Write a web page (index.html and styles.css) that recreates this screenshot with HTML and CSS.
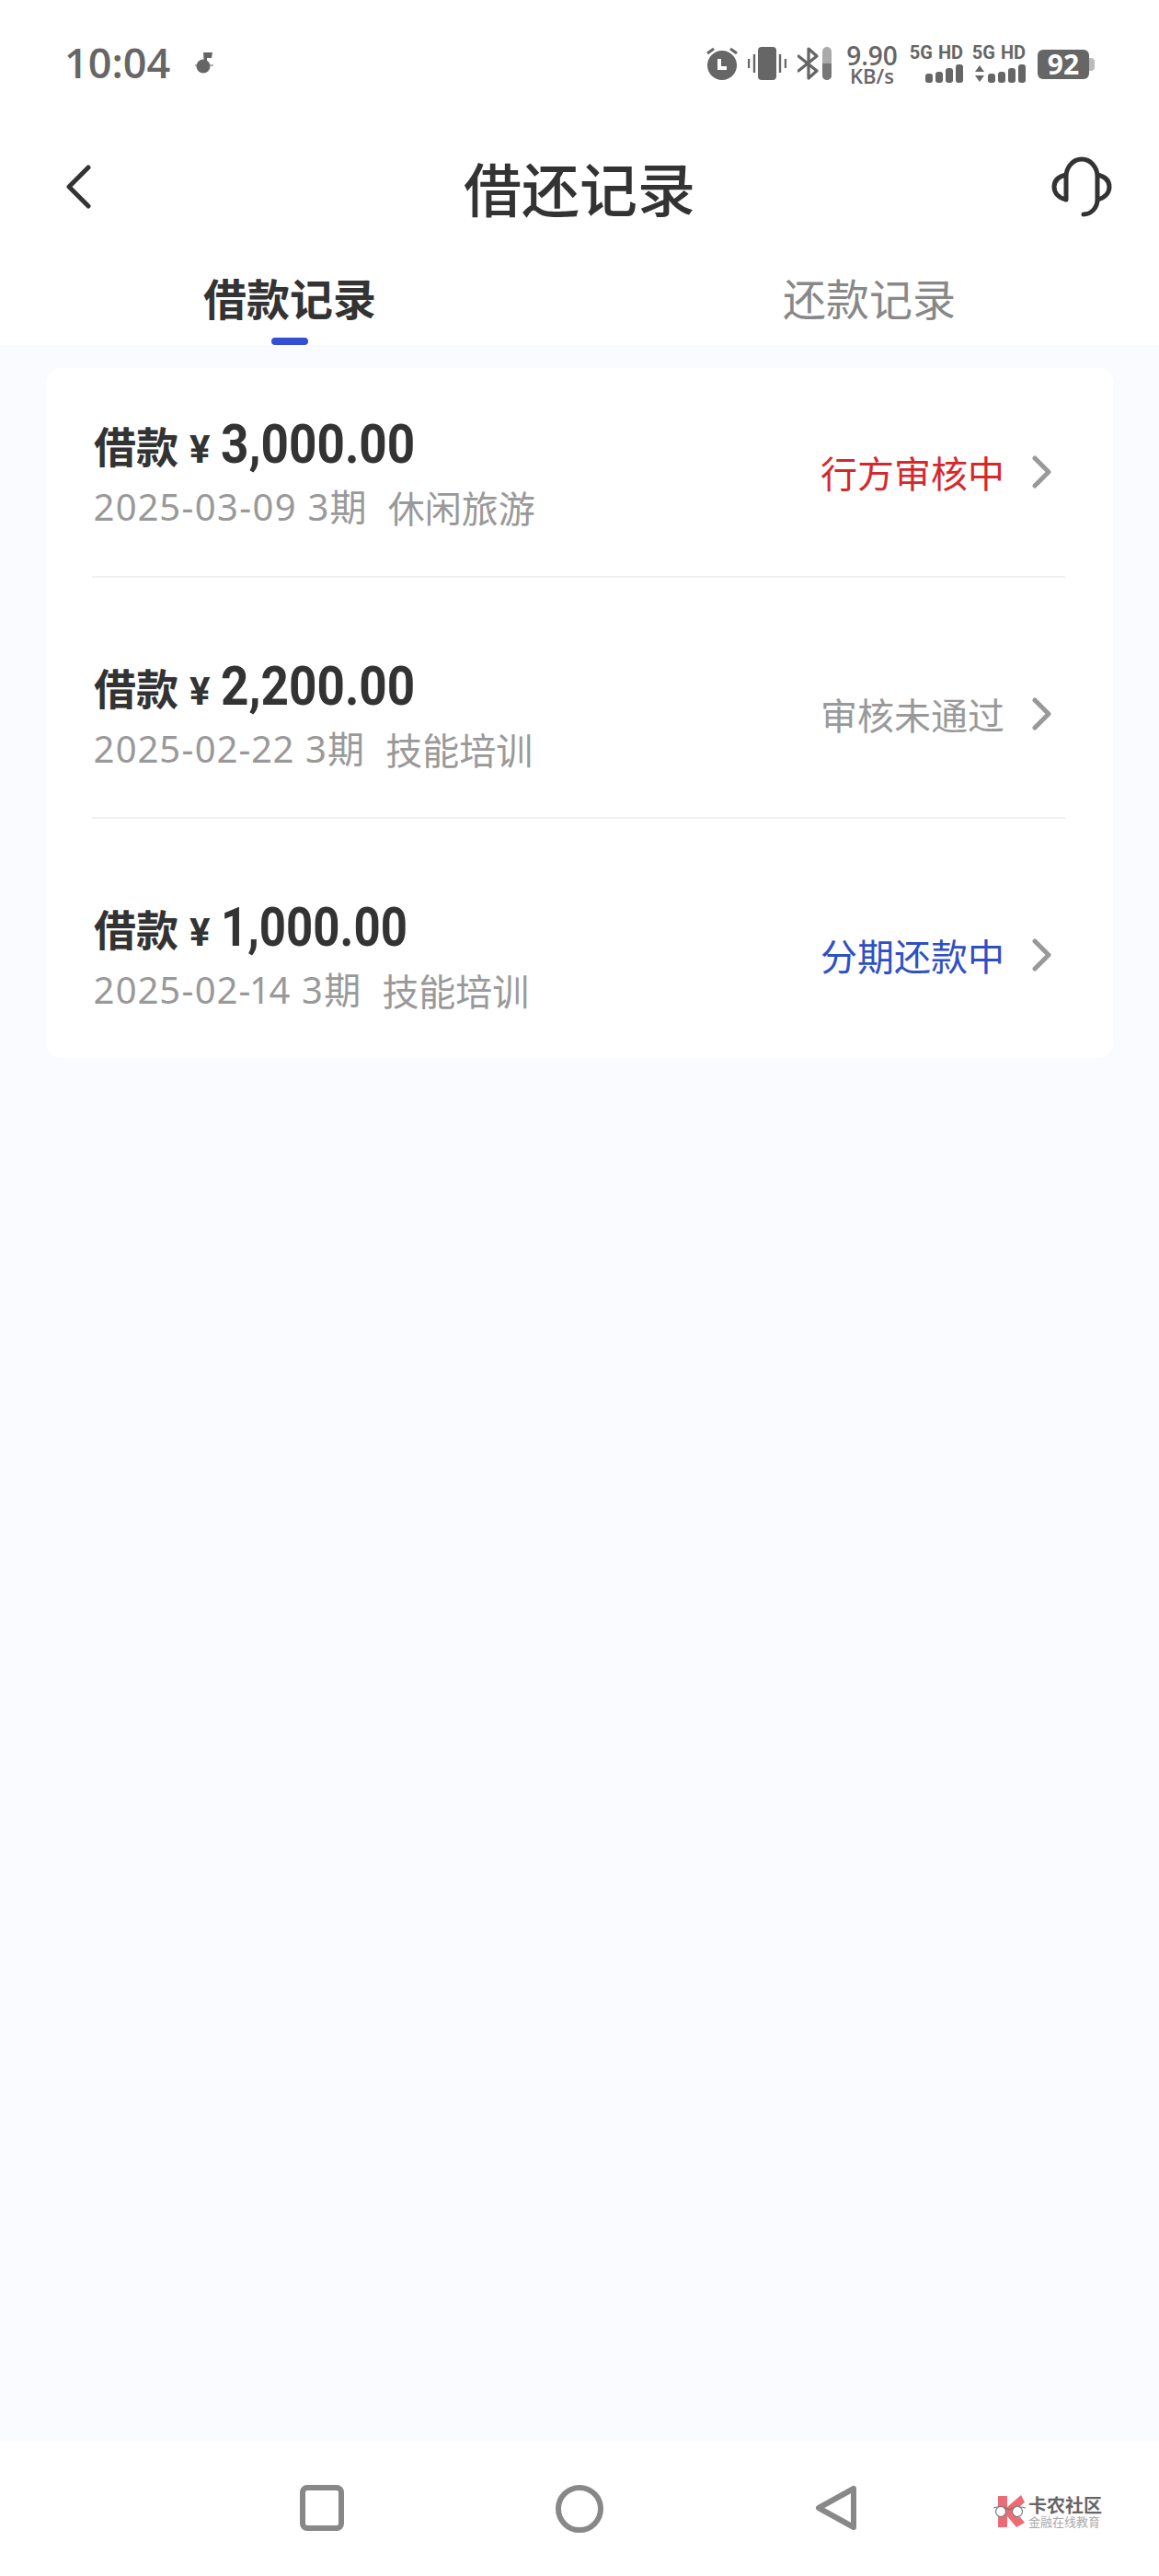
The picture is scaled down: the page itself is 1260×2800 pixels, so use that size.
FILE: index.html
```html
<!DOCTYPE html>
<html lang="zh-CN">
<head>
<meta charset="utf-8">
<title>借还记录</title>
<link rel="stylesheet" href="styles.css">
</head>
<body>
<div class="page">
  <div class="status">
    <div class="status-left">
      <span class="clock">10:04</span>
      <svg class="note" width="20" height="24" viewBox="0 0 20 24"><path d="M9 1h10l-1 6h-5v9h-3z" fill="#666"/><circle cx="9" cy="16" r="7.5" fill="#666"/><path d="M0 15h20" stroke="#666" stroke-width="1"/></svg>
    </div>
    <div class="status-right">
      <svg width="36" height="36" viewBox="0 0 36 36"><circle cx="18" cy="20" r="16" fill="#666"/><path d="M2 7l7-5M34 7l-7-5" stroke="#666" stroke-width="3"/><path d="M15 13v10h8" fill="none" stroke="#fff" stroke-width="4"/></svg>
      <svg class="vib" width="42" height="36" viewBox="0 0 42 36"><rect x="11" y="0" width="20" height="36" rx="4" fill="#666"/><path d="M1 13v10M7 8v20M35 8v20M41 13v10" stroke="#666" stroke-width="2.4"/></svg>
      <svg class="bt" width="38" height="36" viewBox="0 0 38 36"><path d="M1 10l20 16-9 8V2l9 8L1 26" fill="none" stroke="#666" stroke-width="3.2" stroke-linecap="round" stroke-linejoin="round"/><rect x="27" y="0" width="10" height="36" rx="5" fill="#aaa"/><path d="M27 18h10v13a5 5 0 0 1-10 0z" fill="#777"/></svg>
      <div class="speed"><span class="speed-num">9.90</span><span class="speed-unit">KB/s</span></div>
      <div class="sim">
        <span class="sim-label">5G HD</span>
        <div class="bars"><i class="b1"></i><i class="b2"></i><i class="b3"></i><i class="b4"></i></div>
      </div>
      <div class="sim sim-second">
        <span class="sim-label">5G HD</span>
        <div class="bars">
          <svg width="12" height="20" viewBox="0 0 12 20"><path d="M6 1l5 7H1zM6 19l5-7H1z" fill="#666"/></svg>
          <i class="b1"></i><i class="b2"></i><i class="b3"></i><i class="b4"></i>
        </div>
      </div>
      <div class="battery"><span class="battery-body">92</span><span class="battery-cap"></span></div>
    </div>
  </div>

  <header class="titlebar">
    <svg width="28" height="48" viewBox="0 0 28 48"><path d="M25 3L4 24l21 21" fill="none" stroke="#333" stroke-width="5" stroke-linecap="round" stroke-linejoin="round"/></svg>
    <h1 class="title">借还记录</h1>
    <svg width="66" height="68" viewBox="0 0 66 68"><path d="M16 48V23a17 19 0 0 1 34 0v25c0 9-7 16-15 16" fill="none" stroke="#333" stroke-width="5" stroke-linecap="round"/><path d="M16 21C7 23 3 28 3 34s4 12 13 14M50 21c9 2 13 7 13 13s-4 12-13 14" fill="none" stroke="#333" stroke-width="5" stroke-linejoin="round"/></svg>
  </header>

  <nav class="tabs">
    <div class="tab tab-active">借款记录</div>
    <div class="tab">还款记录</div>
  </nav>

  <main class="content">
    <section class="card">
      <article class="row">
        <div class="info">
          <div class="amount"><span class="label">借款</span><span class="yen">¥</span><span class="num">3,000.00</span></div>
          <div class="meta"><span>2025-03-09 3期</span><span>休闲旅游</span></div>
        </div>
        <div class="state state-red">行方审核中</div>
        <svg class="chev" width="22" height="36" viewBox="0 0 22 36"><path d="M3 3l15 15L3 33" fill="none" stroke="#999" stroke-width="5" stroke-linecap="round" stroke-linejoin="round"/></svg>
      </article>
      <article class="row">
        <div class="info">
          <div class="amount"><span class="label">借款</span><span class="yen">¥</span><span class="num">2,200.00</span></div>
          <div class="meta"><span>2025-02-22 3期</span><span>技能培训</span></div>
        </div>
        <div class="state state-grey">审核未通过</div>
        <svg class="chev" width="22" height="36" viewBox="0 0 22 36"><path d="M3 3l15 15L3 33" fill="none" stroke="#999" stroke-width="5" stroke-linecap="round" stroke-linejoin="round"/></svg>
      </article>
      <article class="row">
        <div class="info">
          <div class="amount"><span class="label">借款</span><span class="yen">¥</span><span class="num num-one">1,000.00</span></div>
          <div class="meta"><span>2025-02-14 3期</span><span>技能培训</span></div>
        </div>
        <div class="state state-blue">分期还款中</div>
        <svg class="chev" width="22" height="36" viewBox="0 0 22 36"><path d="M3 3l15 15L3 33" fill="none" stroke="#999" stroke-width="5" stroke-linecap="round" stroke-linejoin="round"/></svg>
      </article>
    </section>
  </main>

  <footer class="navbar">
    <svg width="48" height="50" viewBox="0 0 48 50"><rect x="3" y="3" width="42" height="44" rx="5" fill="none" stroke="#888" stroke-width="6"/></svg>
    <svg width="52" height="52" viewBox="0 0 52 52"><circle cx="26" cy="26" r="23" fill="none" stroke="#888" stroke-width="6"/></svg>
    <svg width="46" height="50" viewBox="0 0 46 50"><path d="M42 4v42L4 25z" fill="none" stroke="#888" stroke-width="6" stroke-linejoin="round"/></svg>
    <div class="logo">
      <svg width="36" height="36" viewBox="0 0 36 36"><path d="M5 1h10v12L30 0l4 8-11 9 11 13-9 5-10-12v12H5z" fill="#ec6b75"/><path d="M0 14l4-1h7l6 3 6-3h7l5 1" fill="none" stroke="#777" stroke-width="1.2"/><circle cx="8" cy="18" r="5.5" fill="#fff" stroke="#777" stroke-width="1.2"/><circle cx="26" cy="18" r="5.5" fill="#fff" stroke="#777" stroke-width="1.2"/></svg>
      <div class="logo-text"><span class="logo-name">卡农社区</span><span class="logo-sub">金融在线教育</span></div>
    </div>
  </footer>
</div>
</body>
</html>
```

FILE: styles.css
```css
* { box-sizing: border-box; }
html, body { margin: 0; padding: 0; }
body {
  background: #fff;
  font-family: "Noto Sans CJK SC", "Noto Sans", sans-serif;
  color: #333;
}
.page {
  width: 1260px;
  height: 2800px;
  display: flex;
  flex-direction: column;
  background: #fafbff;
}

/* status bar */
.status {
  height: 134px;
  padding: 48px 70px 0 70px;
  background: #fff;
  display: flex;
  justify-content: space-between;
  align-items: flex-start;
  color: #666;
}
.status-left { display: flex; align-items: center; gap: 27px; height: 40px; }
.clock {
  font-family: "Open Sans", sans-serif;
  font-size: 45px;
  font-weight: 600;
  line-height: 40px;
  color: #666;
}
.status-right { display: flex; align-items: flex-start; height: 44px; }
.status-right > svg { margin-top: 3px; flex: none; margin-right: 10px; }
.status-right > .vib { margin-right: 12px; }
.status-right > .bt { margin-right: 17px; }
.speed {
  display: flex;
  flex-direction: column;
  align-items: center;
  width: 52px;
  margin-right: 17px;
  font-family: "Open Sans", sans-serif;
  color: #666;
}
.speed-num { font-size: 28px; line-height: 24px; font-weight: 600; }
.speed-unit { font-size: 22px; line-height: 20px; font-weight: 600; }
.sim {
  display: flex;
  flex-direction: column;
  align-items: flex-end;
  width: 56px;
  margin-right: 12px;
}
.sim-label {
  font-family: "Roboto", sans-serif;
  font-size: 20px;
  line-height: 18px;
  font-weight: 700;
  white-space: nowrap;
  word-spacing: 1px;
}
.bars { display: flex; align-items: flex-end; gap: 3px; height: 20px; margin-top: 4px; }
.bars i { display: block; width: 8px; background: #666; border-radius: 3px; }
.bars .b1 { height: 10px; }
.bars .b2 { height: 12px; }
.bars .b3 { height: 16px; }
.bars .b4 { height: 20px; }
.sim-second { margin-right: 13px; }
.battery { display: flex; align-items: center; margin-top: 6px; }
.battery-body {
  width: 56px;
  height: 32px;
  background: #666;
  border-radius: 6px;
  color: #fff;
  font-family: "Open Sans", sans-serif;
  font-size: 30px;
  font-weight: 700;
  line-height: 32px;
  text-align: center;
}
.battery-cap { width: 6px; height: 14px; background: #bbb; border-radius: 0 4px 4px 0; }

/* title */
.titlebar {
  height: 138px;
  padding: 0 51px 0 71px;
  background: #fff;
  display: flex;
  align-items: center;
  justify-content: space-between;
  position: relative;
}
.title {
  margin: 0;
  position: absolute;
  left: 0;
  right: 0;
  text-align: center;
  font-size: 63px;
  font-weight: 500;
  line-height: 136px;
  color: #333;
}

/* tabs */
.tabs {
  height: 103px;
  background: #fff;
  display: grid;
  grid-template-columns: 1fr 1fr;
}
.tab {
  text-align: center;
  font-size: 47px;
  line-height: 102px;
  color: #888;
  position: relative;
}
.tab-active { font-weight: 700; color: #333; }
.tab-active::after {
  content: "";
  position: absolute;
  left: 295px;
  bottom: 0;
  width: 40px;
  height: 8px;
  border-radius: 4px;
  background: #3350d4;
}

/* list */
.content { flex: 1; padding: 25px 50px 0; }
.card {
  background: #fff;
  border-radius: 16px;
  padding: 0 52px 0 50px;
}
.row {
  height: 262px;
  padding-top: 36px;
  display: flex;
  align-items: center;
  border-bottom: 2px solid #f0f0f2;
}
.row:first-child { height: 228px; padding-top: 0; }
.row:last-child { border-bottom: 0; height: 260px; }
.info { flex: 1; padding-left: 2px; margin-top: 3px; }
.amount { display: flex; align-items: baseline; height: 68px; color: #333; }
.label { font-size: 46px; font-weight: 700; line-height: 68px; }
.yen { font-family: "Roboto", sans-serif; font-size: 42px; font-weight: 700; margin-left: 12px; width: 34px; }
.num {
  display: inline-block;
  font-family: "Roboto", sans-serif;
  font-size: 60px;
  font-weight: 700;
  line-height: 68px;
  transform: scaleX(.885);
  transform-origin: left center;
}
.num-one { transform: scaleX(.85); }
.meta {
  display: flex;
  gap: 22px;
  margin-top: 4px;
  font-family: "Noto Sans", "Noto Sans CJK SC", sans-serif;
  font-size: 40px;
  font-variant-numeric: proportional-nums;
  line-height: 60px;
  color: #999;
  letter-spacing: 1.2px;
}
.meta span:last-child { font-family: "Noto Sans CJK SC", sans-serif; letter-spacing: 0; }
.state { font-size: 40px; margin-right: 30px; line-height: 60px; }
.state-red { color: #d4282d; }
.state-grey { color: #999; }
.state-blue { color: #2f4fc4; }
.chev { margin-right: 14px; flex: none; }

/* navigation */
.navbar {
  height: 147px;
  background: #fff;
  position: relative;
  padding-top: 48px;
  padding-left: 326px;
  display: flex;
  align-items: flex-start;
}
.navbar > svg:nth-child(2) { margin-left: 230px; }
.navbar > svg:nth-child(3) { margin-left: 230px; }
.logo {
  position: absolute;
  left: 1080px;
  top: 59px;
  display: flex;
  align-items: center;
  gap: 2px;
}
.logo-text { display: flex; flex-direction: column; }
.logo-name { font-size: 20px; font-weight: 700; line-height: 22px; color: #666; }
.logo-sub { font-size: 13px; line-height: 14px; color: #aaa; white-space: nowrap; }
```
